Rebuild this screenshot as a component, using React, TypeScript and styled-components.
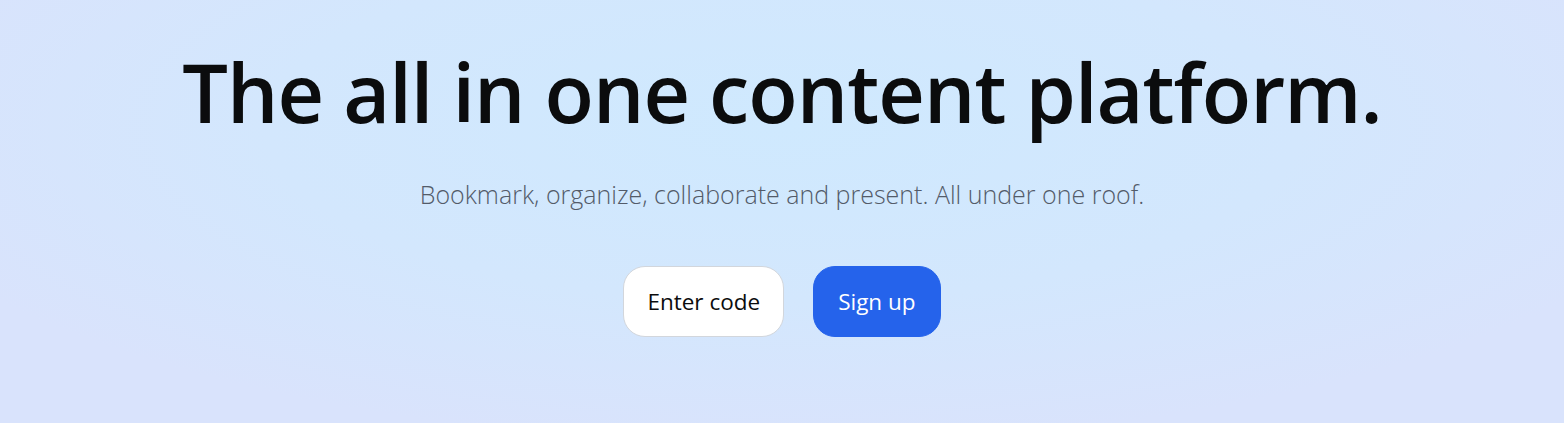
import React from "react";
import styled, { createGlobalStyle } from "styled-components";

const GlobalStyle = createGlobalStyle`
  html, body {
    margin: 0;
    padding: 0;
  }

  body {
    font-family: "Open Sans", "Noto Sans", sans-serif;
  }
`;

const Hero = styled.section`
  display: flex;
  flex-direction: column;
  align-items: center;
  box-sizing: border-box;
  width: 100%;
  height: 423px;
  padding-top: 43px;
  background: radial-gradient(
    ellipse 60% 75% at 50% 30%,
    #cfe9fe 0%,
    #d3e7fd 55%,
    #d9e3fc 100%
  );
  background-color: #d9e3fc;
`;

const Title = styled.h1`
  margin: 0;
  font-size: 81px;
  font-weight: 600;
  line-height: 1.2;
  letter-spacing: -1px;
  color: #0b0c0d;
`;

const Subtitle = styled.p`
  margin: 38px 0 0;
  font-size: 25px;
  font-weight: 300;
  line-height: 1.3;
  color: #535b69;
`;

const Actions = styled.div`
  display: flex;
  gap: 29px;
  margin-top: 55px;
`;

const Button = styled.button<{ $primary?: boolean }>`
  display: flex;
  align-items: center;
  justify-content: center;
  box-sizing: border-box;
  height: 71px;
  padding: 0 ${(p) => (p.$primary ? "24px" : "23px")};
  border-radius: 22px;
  font-family: inherit;
  font-size: 22.5px;
  font-weight: 400;
  cursor: pointer;
  border: 1px solid ${(p) => (p.$primary ? "#2563eb" : "#d2d6dc")};
  background: ${(p) => (p.$primary ? "#2563eb" : "#ffffff")};
  color: ${(p) => (p.$primary ? "#ffffff" : "#0b0c0d")};
`;

export default function App() {
  return (
    <>
      <GlobalStyle />
      <Hero>
        <Title>The all in one content platform.</Title>
        <Subtitle>
          Bookmark, organize, collaborate and present. All under one roof.
        </Subtitle>
        <Actions>
          <Button>Enter code</Button>
          <Button $primary>Sign up</Button>
        </Actions>
      </Hero>
    </>
  );
}
